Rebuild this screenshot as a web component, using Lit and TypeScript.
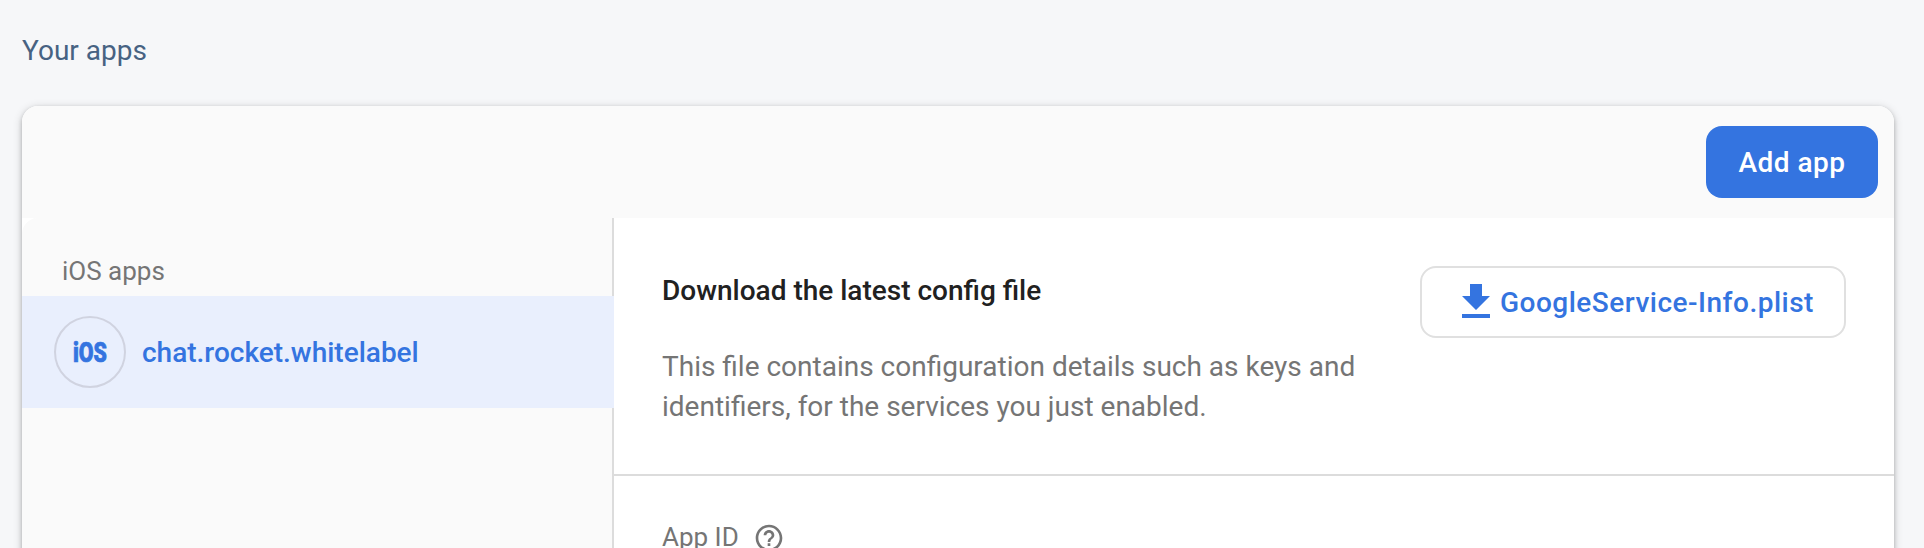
import { LitElement, html, css } from "lit";
import { customElement } from "lit/decorators.js";

@customElement("app-root")
export class AppRoot extends LitElement {
  static styles = css`
    :host {
      display: block;
      box-sizing: border-box;
      height: 548px;
      overflow: hidden;
      padding: 0 30px 0 22px;
      background: #f6f7f9;
      font-family: Roboto, "Liberation Sans", sans-serif;
      font-size: 28px;
      line-height: 40px;
      color: #757575;
    }
    *, *::before { box-sizing: border-box; }
    h2, h3, p { margin: 0; font-size: inherit; font-weight: 400; }
    .title { padding: 31px 0 35px; color: #476282; }
    .card {
      height: 600px;
      border-radius: 16px;
      background: #fff;
      overflow: hidden;
      box-shadow: 0 2px 4px rgba(0, 0, 0, 0.2), 0 2px 10px rgba(0, 0, 0, 0.19);
    }
    .toolbar {
      height: 112px;
      padding-right: 16px;
      display: flex;
      align-items: center;
      justify-content: flex-end;
      background: #fafafa;
    }
    button { font: inherit; font-weight: 500; height: 72px; border-radius: 16px; letter-spacing: 0.5px; }
    .add { width: 172px; padding: 2px 0 0; border: 0; background: #3474e0; color: #fff; }
    .body { display: grid; grid-template-columns: 592px 1fr; height: 488px; }
    .side { background: #fafafa; border-top-left-radius: 16px; padding-top: 32px; box-shadow: inset -2px 0 #dcdcdc; }
    .group { font-size: 26px; height: 46px; line-height: 42px; padding-left: 40px; }
    .app {
      height: 112px;
      padding-left: 32px;
      display: flex;
      align-items: center;
      gap: 16px;
      background: #e9effd;
      color: #3474e0;
      font-weight: 500;
    }
    .name { padding-top: 2px; }
    .badge {
      width: 72px;
      height: 72px;
      border: 2px solid #d0d3e0;
      border-radius: 50%;
      display: flex;
      align-items: center;
      justify-content: center;
    }
    .badge svg { display: block; }
    .mark { font: 900 27px Roboto, sans-serif; fill: #3474e0; stroke: #3474e0; stroke-width: 0.7px; }
    .config { height: 258px; padding: 48px 48px 0 48px; display: flex; justify-content: space-between; border-bottom: 2px solid #dcdcdc; }
    .config h3 { font-weight: 500; color: #212121; line-height: 48px; padding-top: 1px; margin-bottom: 32px; }
    .copy { width: 700px; }
    .download {
      width: 426px;
      border: 2px solid #e0e0e0;
      background: #fff;
      color: #3474e0;
      padding: 0 0 0 30px;
      display: flex;
      align-items: center;
      white-space: nowrap;
    }
    .download svg { flex: none; }
    .download span { padding-top: 2px; }
    .field { display: flex; align-items: flex-start; gap: 14px; padding: 40px 0 0 48px; font-size: 26px; line-height: 42px; }
    .field svg { display: block; margin-top: 6px; }
  `;

  render() {
    return html`
      <h2 class="title">Your apps</h2>
      <section class="card">
        <div class="toolbar"><button class="add">Add app</button></div>
        <div class="body">
          <nav class="side">
            <div class="group">iOS apps</div>
            <div class="app">
              <span class="badge">
                <svg width="48" height="48" viewBox="0 0 48 48">
                  <text class="mark" x="7" y="33.700" textLength="34" lengthAdjust="spacingAndGlyphs">iOS</text>
                </svg>
              </span>
              <span class="name">chat.rocket.whitelabel</span>
            </div>
          </nav>
          <main>
            <div class="config">
              <div class="copy">
                <h3>Download the latest config file</h3>
                <p>This file contains configuration details such as keys and identifiers, for the services you just enabled.</p>
              </div>
              <button class="download">
                <svg width="48" height="48" viewBox="0 0 24 24" fill="currentColor">
                  <path d="M19 9h-4V3H9v6H5l7 7 7-7zM5 18v2h14v-2H5z" />
                </svg>
                <span>GoogleService-Info.plist</span>
              </button>
            </div>
            <div class="field">
              <span>App ID</span>
              <svg width="32" height="32" viewBox="0 0 24 24" fill="currentColor">
                <path d="M11 18h2v-2h-2v2zm1-16C6.48 2 2 6.48 2 12s4.48 10 10 10 10-4.480 10-10S17.520 2 12 2zm0 18c-4.410 0-8-3.590-8-8s3.590-8 8-8 8 3.590 8 8-3.590 8-8 8zm0-14c-2.210 0-4 1.790-4 4h2c0-1.100.9-2 2-2s2 .9 2 2c0 2-3 1.750-3 5h2c0-2.250 3-2.500 3-5 0-2.210-1.790-4-4-4z" />
              </svg>
            </div>
          </main>
        </div>
      </section>
    `;
  }
}
